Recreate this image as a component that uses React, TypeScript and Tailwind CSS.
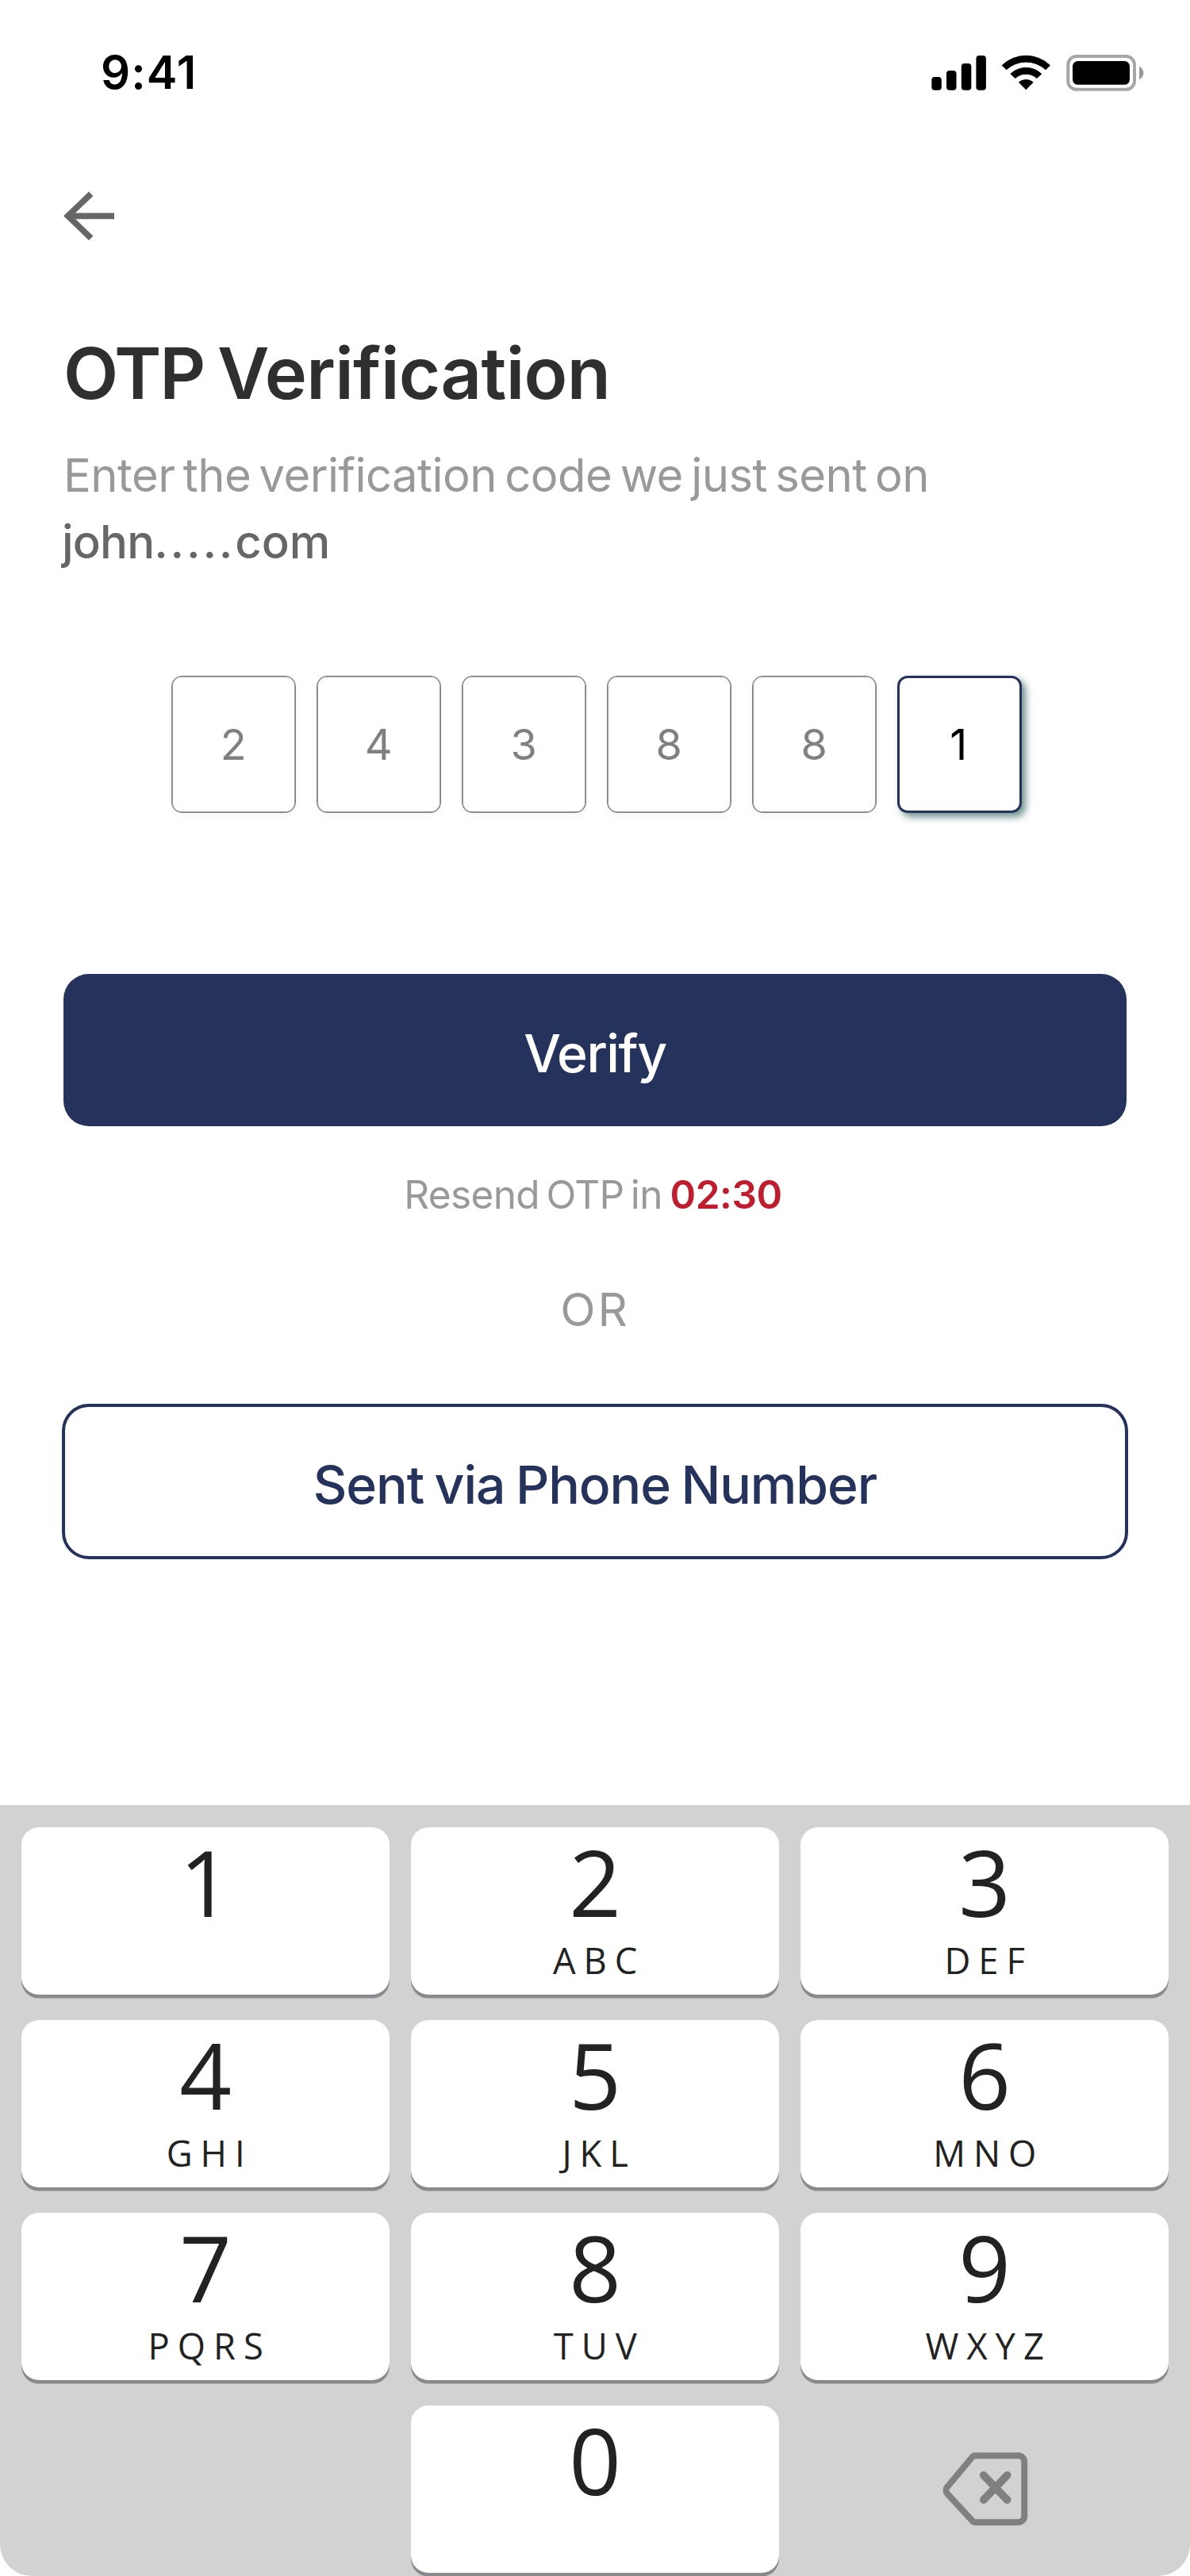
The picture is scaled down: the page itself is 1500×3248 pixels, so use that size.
const otpDigits = ['2', '4', '3', '8', '8', '1'];

const keys: { digit: string; letters?: string }[] = [
  { digit: '1' },
  { digit: '2', letters: 'ABC' },
  { digit: '3', letters: 'DEF' },
  { digit: '4', letters: 'GHI' },
  { digit: '5', letters: 'JKL' },
  { digit: '6', letters: 'MNO' },
  { digit: '7', letters: 'PQRS' },
  { digit: '8', letters: 'TUV' },
  { digit: '9', letters: 'WXYZ' },
];

function StatusIcons() {
  return (
    <svg width="272" height="62" viewBox="1172 60 272 62" fill="none" aria-hidden="true">
      <g fill="#000">
        <rect x="1174.3" y="97" width="12.5" height="16.7" rx="4" />
        <rect x="1193" y="89" width="12.5" height="24.7" rx="4" />
        <rect x="1211.8" y="80" width="12.5" height="33.7" rx="4" />
        <rect x="1230.4" y="70" width="12.5" height="43.7" rx="4" />
      </g>
      <g fill="#000" stroke="#000" strokeWidth="1" strokeLinejoin="round">
        <path d="M1263.2 82.4A43.5 43.5 0 0 1 1323.4 82.4L1318 87.7A36.5 36.5 0 0 0 1268.6 87.7Z" />
        <path d="M1273.9 93.2A28 28 0 0 1 1312.7 93.2L1306.8 98.5A20 20 0 0 0 1279.8 98.5Z" />
        <path d="M1284.4 103.8A14 14 0 0 1 1302.2 103.8L1293.3 112.7Z" />
      </g>
      <rect x="1346.3" y="71" width="83.7" height="41.8" rx="10.5" stroke="#a6a6a6" strokeWidth="4" />
      <rect x="1352" y="77" width="72" height="29.8" rx="6.5" fill="#000" />
      <path d="M1436 83.7C1439.3 85.2 1441.4 88.4 1441.4 91.9C1441.4 95.4 1439.3 98.6 1436 100.1Z" fill="#999" />
    </svg>
  );
}

function BackArrow() {
  return (
    <svg width="64" height="64" viewBox="80 240 64 64" fill="none" stroke="#666" strokeWidth="7.7" aria-hidden="true">
      <path d="M144 272.3H87" />
      <path d="M114.7 244.4L85.6 272.3L114.7 300.2" />
    </svg>
  );
}

function DeleteIcon() {
  return (
    <svg width="108" height="94" viewBox="1188 3091 108 94" fill="none" stroke="#808080" strokeWidth="8" strokeLinejoin="round" strokeLinecap="round" aria-hidden="true">
      <path d="M1229.5 3096.2H1283.5A7.7 7.7 0 0 1 1291.2 3103.9V3172.6A7.7 7.7 0 0 1 1283.5 3180.3H1229.5A5 5 0 0 1 1225.7 3178.5L1194.3 3144.5A6.5 6.5 0 0 1 1194.2 3135.5L1225.6 3098A5 5 0 0 1 1229.5 3096.2Z" />
      <path d="M1239.8 3120.8L1269.6 3152M1269.6 3120.8L1239.8 3152" strokeWidth="9.8" />
    </svg>
  );
}

export default function App() {
  return (
    <div className="flex h-[3248px] w-[1500px] flex-col overflow-hidden bg-white font-['Inter',sans-serif]">
      <header className="flex h-[182px] items-center justify-between pl-[127px] pr-[56px]">
        <span className="text-[58px] font-semibold leading-[70px] tracking-[1.1px] text-black">9:41</span>
        <StatusIcons />
      </header>

      <main className="flex flex-col px-[80px] pt-[58px]">
        <button type="button" aria-label="Back" className="w-[64px]">
          <BackArrow />
        </button>

        <h1 className="mt-[111px] text-[90px] font-semibold leading-[112px] tracking-[-0.64px] text-[#2f2f2f] [word-spacing:-5px]">
          <span className="tracking-[-2.3px]">OTP</span> Verification
        </h1>
        <p className="mt-[30px] whitespace-nowrap text-[58px] leading-[84px] tracking-[-0.55px] text-[#999] [word-spacing:-5.4px]">
          Enter the verification code we just sent on
          <br />
          <span className="-ml-[2px] font-medium text-[#666]">
            <span className="tracking-[-0.8px]">john</span>
            <span className="tracking-[2.8px]">.....</span>
            <span className="tracking-[0px]">com</span>
          </span>
        </p>

        <div className="mt-[127px] flex gap-[26.5px] pl-[136px]">
          {otpDigits.map((digit, i) => (
            <div
              key={i}
              className={
                i === otpDigits.length - 1
                  ? 'flex h-[173px] w-[156.5px] items-center justify-center rounded-[13px] border-[3px] border-[#25325b] bg-white pr-[2px] text-[54px] text-black shadow-[5px_5px_10px_rgba(10,70,65,0.6)]'
                  : 'flex h-[173px] w-[156.5px] items-center justify-center rounded-[13px] border border-[#808080] bg-white text-[54px] text-[#808080] shadow-[inset_0_0_0_0.8px_#808080,0_4px_8px_rgba(0,0,0,0.03)]'
              }
            >
              {digit}
            </div>
          ))}
        </div>

        <button type="button" className="mt-[203px] flex h-[192px] items-center justify-center rounded-[32px] bg-[#25325b] pt-[8px] text-[66px] font-medium tracking-[-1.4px] text-white">
          Verify
        </button>

        <p className="mt-[56px] flex justify-center gap-[9.5px] pr-[5px] text-[49.5px] leading-[60px]">
          <span className="tracking-[-0.6px] text-[#999] [word-spacing:-5px]">Resend OTP in</span>
          <span className="font-semibold tracking-[-0.4px] text-[#c01c2e]">02:30</span>
        </p>
        <p className="mt-[79px] text-center text-[58px] leading-[72px] tracking-[3px] text-[#999]">OR</p>

        <button type="button" className="-mx-[2px] mt-[83px] flex h-[196px] items-center justify-center rounded-[34px] border-4 border-[#25325b] bg-white pt-[8px] text-[66px] font-medium tracking-[-1.1px] text-[#25325b] [word-spacing:-2.9px]">
          Sent via Phone Number
        </button>
      </main>

      <section className="mt-auto grid h-[972px] grid-cols-[repeat(3,464px)] content-start gap-x-[27px] gap-y-[31.6px] rounded-b-[40px] bg-[#d2d2d2] pl-[27.2px] pt-[27.6px] font-['Open_Sans',sans-serif] text-[#222]">
        {keys.map(({ digit, letters }) => (
          <button key={digit} type="button" className="flex h-[211.4px] flex-col items-center rounded-[22px] bg-white pt-[9px] shadow-[0_4.6px_0_#898a8d]">
            <span className="text-[115px] leading-[120px]">{digit}</span>
            {letters && <span className="mt-[9px] pl-[10px] text-[45.3px] leading-[60px] tracking-[10px]">{letters}</span>}
          </button>
        ))}
        <button type="button" className="col-start-2 flex h-[211.4px] flex-col items-center rounded-[22px] bg-white pt-[9px] shadow-[0_4.6px_0_#898a8d]">
          <span className="text-[115px] leading-[120px]">0</span>
        </button>
        <button type="button" aria-label="Delete" className="flex h-[211.4px] items-center justify-center pl-[2px]">
          <DeleteIcon />
        </button>
      </section>
    </div>
  );
}
